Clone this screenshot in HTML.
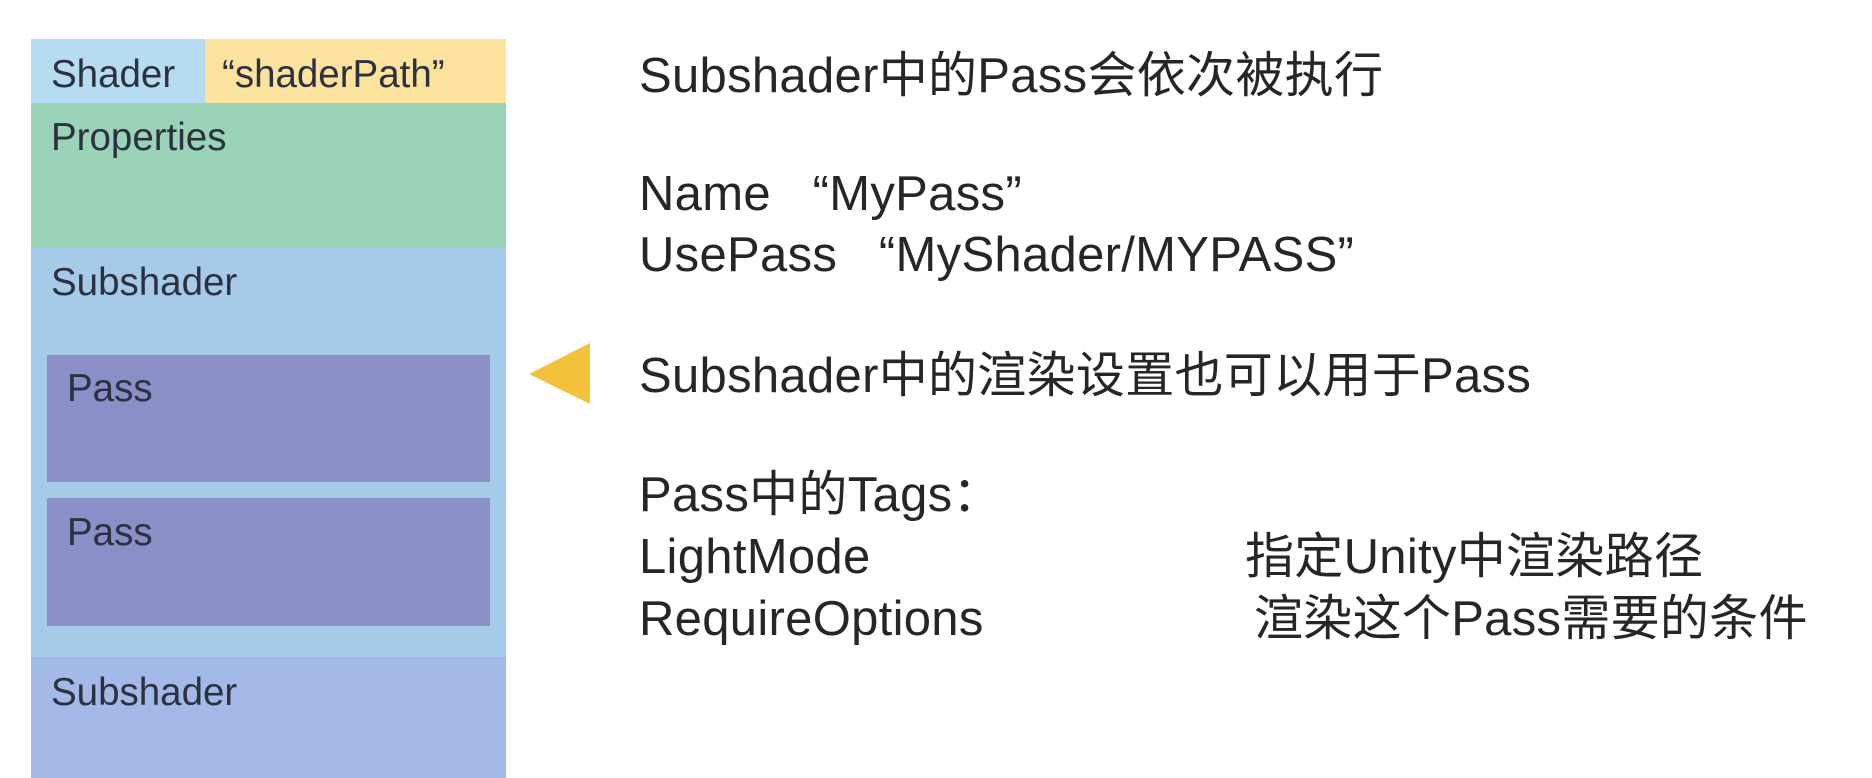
<!DOCTYPE html>
<html><head><meta charset="utf-8"><style>
body{margin:0;width:1872px;height:778px;background:#fff;position:relative;overflow:hidden;font-family:"Liberation Sans","Noto Sans CJK SC",sans-serif;}
.b{position:absolute}
.l{position:absolute;font-size:38.5px;color:#2c3140;line-height:1;}
.r{position:absolute;font-size:49px;color:#262626;line-height:1;letter-spacing:0.3px;white-space:nowrap}
</style></head><body>
<div class="b" style="left:31px;top:39px;width:174px;height:64px;background:#b6dcf1"></div>
<div class="b" style="left:205px;top:39px;width:301px;height:64px;background:#fbe39d"></div>
<div class="b" style="left:31px;top:103px;width:475px;height:144px;background:#9bd3b8"></div>
<div class="b" style="left:31px;top:247px;width:475px;height:410px;background:#a6cbe8"></div>
<div class="b" style="left:47px;top:355px;width:443px;height:127px;background:#8b8fc7"></div>
<div class="b" style="left:47px;top:498px;width:443px;height:128px;background:#8b8fc7"></div>
<div class="b" style="left:31px;top:657px;width:475px;height:121px;background:#a3b9e7"></div>
<div class="l" style="left:51px;top:56px">Shader</div>
<div class="l" style="left:222px;top:56px">“shaderPath”</div>
<div class="l" style="left:51px;top:119px">Properties</div>
<div class="l" style="left:51px;top:264px">Subshader</div>
<div class="l" style="left:67px;top:370px">Pass</div>
<div class="l" style="left:67px;top:514px">Pass</div>
<div class="l" style="left:51px;top:674px">Subshader</div>
<svg class="b" style="left:529px;top:343px" width="62" height="62"><polygon points="0,31 61,0 61,61" fill="#f3c13a"/></svg>
<div class="r" style="left:639px;top:52px">Subshader中的Pass会依次被执行</div>
<div class="r" style="left:639px;top:170px">Name&nbsp;&nbsp;&nbsp;“MyPass”</div>
<div class="r" style="left:639px;top:231px">UsePass&nbsp;&nbsp;&nbsp;“MyShader/MYPASS”</div>
<div class="r" style="left:639px;top:352px">Subshader中的渲染设置也可以用于Pass</div>
<div class="r" style="left:639px;top:471px">Pass中的Tags：</div>
<div class="r" style="left:639px;top:533px">LightMode</div>
<div class="r" style="left:639px;top:595px">RequireOptions</div>
<div class="r" style="left:1245px;top:533px">指定Unity中渲染路径</div>
<div class="r" style="left:1254px;top:595px">渲染这个Pass需要的条件</div>
</body></html>
